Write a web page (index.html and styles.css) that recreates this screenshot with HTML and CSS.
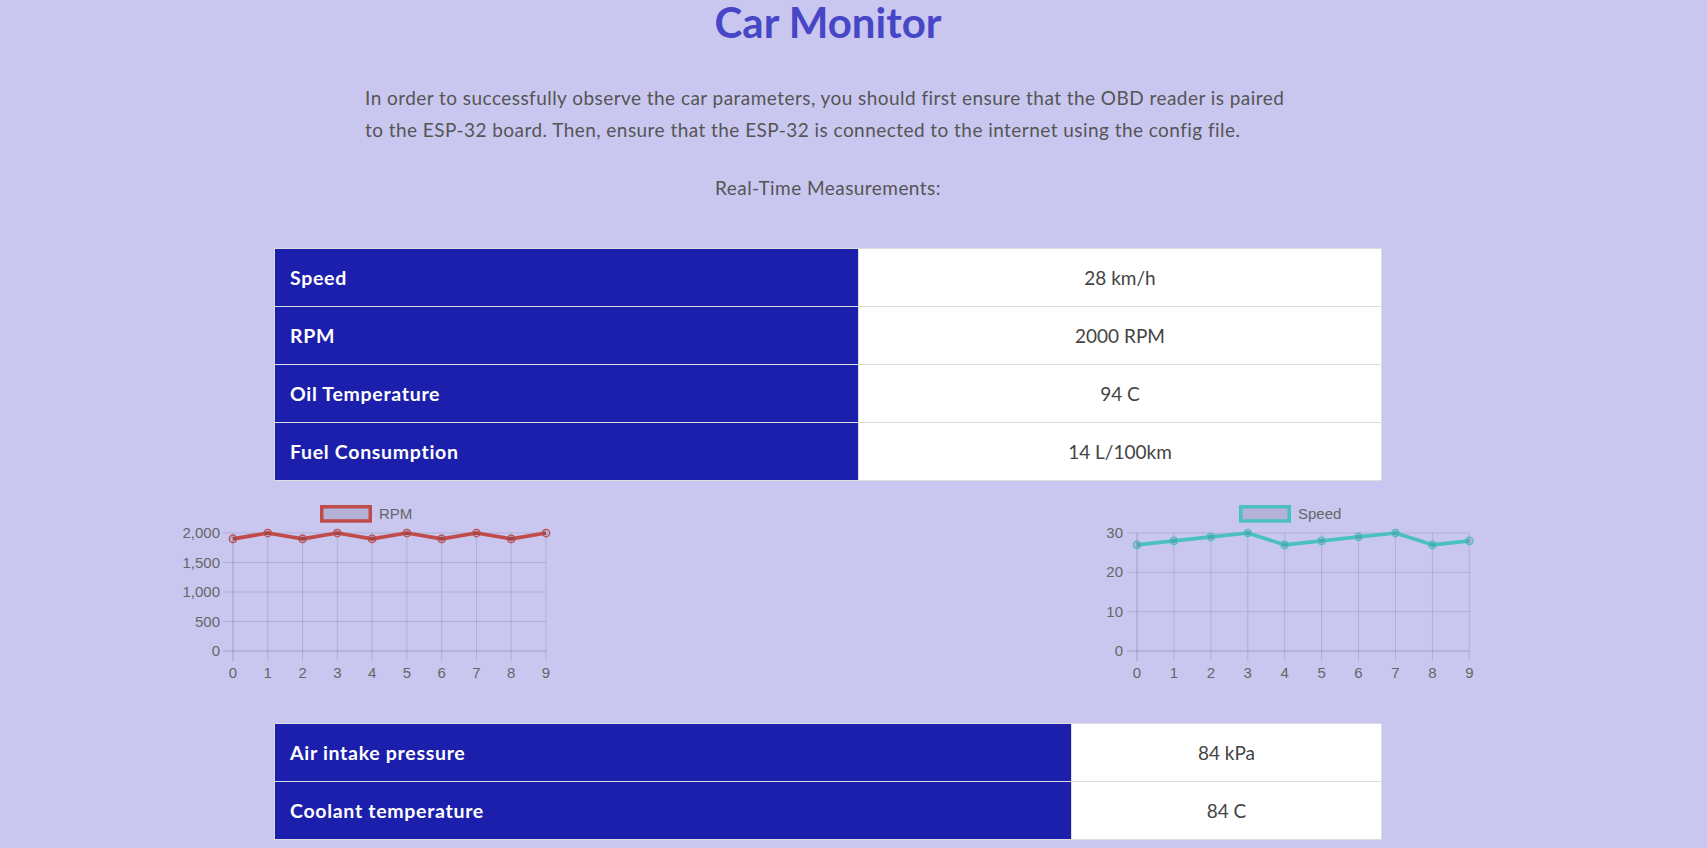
FILE: index.html
```html
<!DOCTYPE html>
<html lang="en">
<head>
<meta charset="utf-8">
<title>Car Monitor</title>
<link rel="stylesheet" href="styles.css">
</head>
<body>
<div class="page">
  <h1 class="title">Car Monitor</h1>
  <p class="intro">In order to successfully observe the car parameters, you should first ensure that the OBD reader is paired to the ESP-32 board. Then, ensure that the ESP-32 is connected to the internet using the config file.</p>
  <p class="subtitle">Real-Time Measurements:</p>

  <table class="data data-main">
    <tr><th>Speed</th><td>28 km/h</td></tr>
    <tr><th>RPM</th><td>2000 RPM</td></tr>
    <tr><th>Oil Temperature</th><td>94 C</td></tr>
    <tr><th>Fuel Consumption</th><td>14 L/100km</td></tr>
  </table>

  <div class="charts">
    <svg class="chart" width="390" height="200" viewBox="0 0 390 200">
      <rect class="legend-box legend-rpm" x="148.75" y="15.75" width="48.5" height="14.2"/>
      <text class="legend-text" x="206" y="27.7">RPM</text>
      <g class="grid">
        <line x1="50" y1="42" x2="373" y2="42"/>
        <line x1="50" y1="71.5" x2="373" y2="71.5"/>
        <line x1="50" y1="101" x2="373" y2="101"/>
        <line x1="50" y1="130.5" x2="373" y2="130.5"/>
        <line x1="94.78" y1="42" x2="94.78" y2="170"/>
        <line x1="129.56" y1="42" x2="129.56" y2="170"/>
        <line x1="164.33" y1="42" x2="164.33" y2="170"/>
        <line x1="199.11" y1="42" x2="199.11" y2="170"/>
        <line x1="233.89" y1="42" x2="233.89" y2="170"/>
        <line x1="268.67" y1="42" x2="268.67" y2="170"/>
        <line x1="303.44" y1="42" x2="303.44" y2="170"/>
        <line x1="338.22" y1="42" x2="338.22" y2="170"/>
        <line x1="373" y1="42" x2="373" y2="170"/>
      </g>
      <g class="axis">
        <line x1="60" y1="42" x2="60" y2="170"/>
        <line x1="50" y1="160" x2="373" y2="160"/>
      </g>
      <g class="ticks ticks-y">
        <text x="47" y="47">2,000</text>
        <text x="47" y="76.5">1,500</text>
        <text x="47" y="106">1,000</text>
        <text x="47" y="135.5">500</text>
        <text x="47" y="165">0</text>
      </g>
      <g class="ticks ticks-x">
        <text x="60" y="187">0</text>
        <text x="94.78" y="187">1</text>
        <text x="129.56" y="187">2</text>
        <text x="164.33" y="187">3</text>
        <text x="199.11" y="187">4</text>
        <text x="233.89" y="187">5</text>
        <text x="268.67" y="187">6</text>
        <text x="303.44" y="187">7</text>
        <text x="338.22" y="187">8</text>
        <text x="373" y="187">9</text>
      </g>
      <polyline class="series series-rpm" points="60,47.9 94.78,42 129.56,47.9 164.33,42 199.11,47.9 233.89,42 268.67,47.9 303.44,42 338.22,47.9 373,42"/>
      <g class="points points-rpm">
        <circle cx="60" cy="47.9" r="3.75"/>
        <circle cx="94.78" cy="42" r="3.75"/>
        <circle cx="129.56" cy="47.9" r="3.75"/>
        <circle cx="164.33" cy="42" r="3.75"/>
        <circle cx="199.11" cy="47.9" r="3.75"/>
        <circle cx="233.89" cy="42" r="3.75"/>
        <circle cx="268.67" cy="47.9" r="3.75"/>
        <circle cx="303.44" cy="42" r="3.75"/>
        <circle cx="338.22" cy="47.9" r="3.75"/>
        <circle cx="373" cy="42" r="3.75"/>
      </g>
    </svg>

    <svg class="chart" width="390" height="200" viewBox="0 0 390 200">
      <rect class="legend-box legend-speed" x="147.75" y="15.75" width="48.5" height="14.2"/>
      <text class="legend-text" x="205" y="27.7">Speed</text>
      <g class="grid">
        <line x1="34" y1="42" x2="376.3" y2="42"/>
        <line x1="34" y1="81.33" x2="376.3" y2="81.33"/>
        <line x1="34" y1="120.67" x2="376.3" y2="120.67"/>
        <line x1="80.92" y1="42" x2="80.92" y2="170"/>
        <line x1="117.84" y1="42" x2="117.84" y2="170"/>
        <line x1="154.77" y1="42" x2="154.77" y2="170"/>
        <line x1="191.69" y1="42" x2="191.69" y2="170"/>
        <line x1="228.61" y1="42" x2="228.61" y2="170"/>
        <line x1="265.53" y1="42" x2="265.53" y2="170"/>
        <line x1="302.46" y1="42" x2="302.46" y2="170"/>
        <line x1="339.38" y1="42" x2="339.38" y2="170"/>
        <line x1="376.3" y1="42" x2="376.3" y2="170"/>
      </g>
      <g class="axis">
        <line x1="44" y1="42" x2="44" y2="170"/>
        <line x1="34" y1="160" x2="376.3" y2="160"/>
      </g>
      <g class="ticks ticks-y">
        <text x="30" y="47">30</text>
        <text x="30" y="86.33">20</text>
        <text x="30" y="125.67">10</text>
        <text x="30" y="165">0</text>
      </g>
      <g class="ticks ticks-x">
        <text x="44" y="187">0</text>
        <text x="80.92" y="187">1</text>
        <text x="117.84" y="187">2</text>
        <text x="154.77" y="187">3</text>
        <text x="191.69" y="187">4</text>
        <text x="228.61" y="187">5</text>
        <text x="265.53" y="187">6</text>
        <text x="302.46" y="187">7</text>
        <text x="339.38" y="187">8</text>
        <text x="376.3" y="187">9</text>
      </g>
      <polyline class="series series-speed" points="44,53.8 80.92,49.87 117.84,45.93 154.77,42 191.69,53.8 228.61,49.87 265.53,45.93 302.46,42 339.38,53.8 376.3,49.87"/>
      <g class="points points-speed">
        <circle cx="44" cy="53.8" r="3.75"/>
        <circle cx="80.92" cy="49.87" r="3.75"/>
        <circle cx="117.84" cy="45.93" r="3.75"/>
        <circle cx="154.77" cy="42" r="3.75"/>
        <circle cx="191.69" cy="53.8" r="3.75"/>
        <circle cx="228.61" cy="49.87" r="3.75"/>
        <circle cx="265.53" cy="45.93" r="3.75"/>
        <circle cx="302.46" cy="42" r="3.75"/>
        <circle cx="339.38" cy="53.8" r="3.75"/>
        <circle cx="376.3" cy="49.87" r="3.75"/>
      </g>
    </svg>
  </div>

  <table class="data data-extra">
    <tr><th>Air intake pressure</th><td>84 kPa</td></tr>
    <tr><th>Coolant temperature</th><td>84 C</td></tr>
  </table>
</div>
</body>
</html>
```

FILE: styles.css
```css
html, body {
  margin: 0;
  padding: 0;
}

body {
  background: #c9c7ef;
  font-family: Lato, "Open Sans", sans-serif;
  color: #555;
  overflow: hidden;
}

.page {
  width: 1656px;
}

.title {
  margin: 1px 0 0;
  font-size: 42px;
  line-height: 42px;
  font-weight: 700;
  color: #4646c6;
  text-align: center;
}

.intro {
  width: 926px;
  margin: 39px auto 0;
  font-size: 19px;
  line-height: 32px;
  letter-spacing: 0.45px;
  color: #555;
}

.subtitle {
  margin: 26px 0 0;
  font-size: 19px;
  line-height: 32px;
  letter-spacing: 0.45px;
  text-align: center;
  color: #555;
}

.data {
  width: 1108px;
  margin: 44px auto 0;
  border-collapse: collapse;
  font-size: 19px;
}

.data th,
.data td {
  border: 1px solid #ddd;
  height: 58px;
  padding: 0;
  box-sizing: border-box;
}

.data th {
  background: #1c1fab;
  color: #fff;
  font-size: 19.5px;
  font-weight: 700;
  letter-spacing: 0.7px;
  text-align: left;
  padding-left: 15px;
}

.data td {
  background: #fff;
  color: #444;
  text-align: center;
}

.data-main th {
  width: 584px;
}

.data-extra th {
  width: 797px;
}

.data-extra {
  margin-top: 32px;
}

.charts {
  width: 1310px;
  margin: 10px auto 0;
  display: flex;
  justify-content: space-between;
}

.chart {
  display: block;
  font-family: "Liberation Sans", Arial, sans-serif;
}

.legend-box {
  fill: rgba(0, 0, 0, 0.1);
  stroke-width: 3.5;
}

.legend-rpm { stroke: rgb(192, 75, 75); }
.legend-speed { stroke: rgb(75, 192, 192); }

.legend-text {
  font-size: 15px;
  fill: #666;
}

.grid line {
  stroke: rgba(0, 0, 0, 0.12);
  stroke-width: 1;
}

.axis line {
  stroke: rgba(0, 0, 0, 0.2);
  stroke-width: 1;
}

.ticks text {
  font-size: 15px;
  fill: #666;
}

.ticks-y text { text-anchor: end; }
.ticks-x text { text-anchor: middle; }

.series {
  fill: none;
  stroke-width: 3.75;
  stroke-linejoin: round;
}

.series-rpm { stroke: rgb(192, 75, 75); }
.series-speed { stroke: rgb(75, 192, 192); }

.points circle {
  fill: rgba(0, 0, 0, 0.1);
  stroke-width: 1.25;
}

.points-rpm circle { stroke: rgb(192, 75, 75); }
.points-speed circle { stroke: rgb(75, 192, 192); }
```
